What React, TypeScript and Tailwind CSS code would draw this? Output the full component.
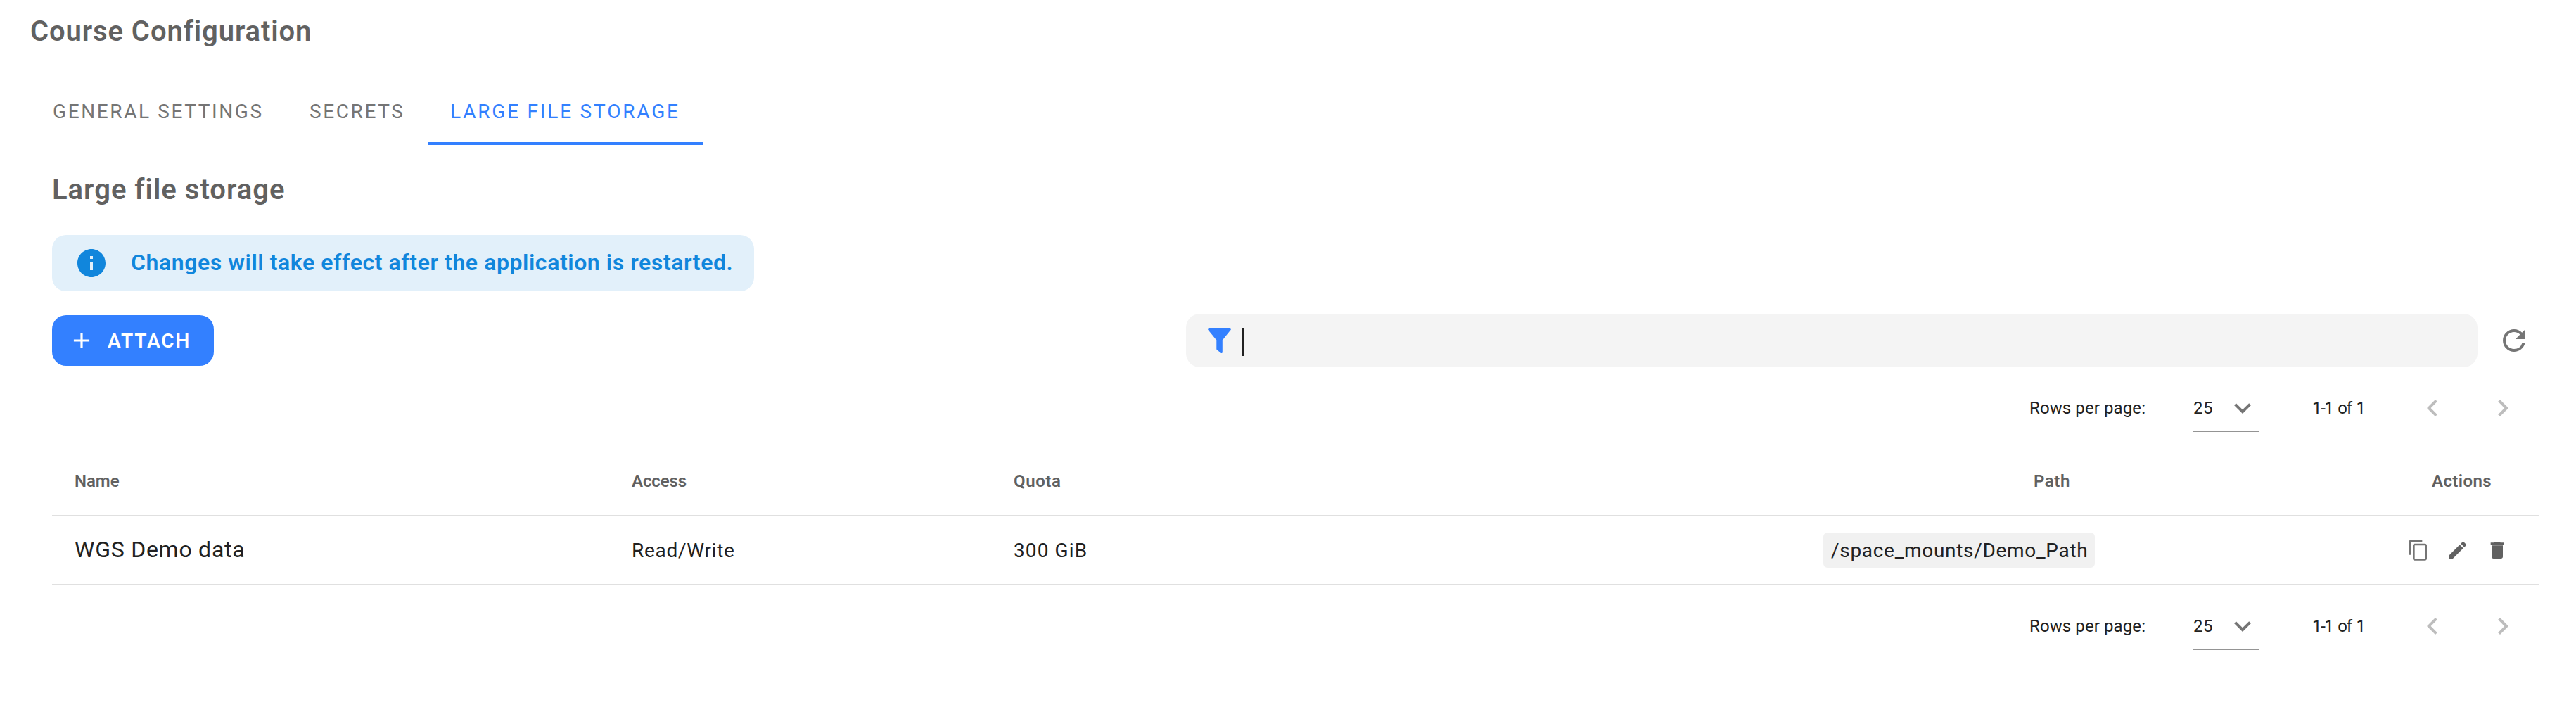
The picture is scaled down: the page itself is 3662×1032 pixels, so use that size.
import {
  MdAdd,
  MdChevronLeft,
  MdChevronRight,
  MdContentCopy,
  MdDelete,
  MdEdit,
  MdExpandMore,
  MdInfo,
  MdRefresh,
} from "react-icons/md";

function FilterIcon() {
  return (
    <svg viewBox="0 0 33 36" className="h-9 w-[33px] shrink-0 fill-[#3380ff]">
      <path d="M1.8 0H31.2C32.8 0 33.5 1.7 32.5 2.9L20.8 17.6V34.4C20.8 35.8 19.3 36.5 18.2 35.6L13 31.3C12.5 30.9 12.3 30.5 12.3 29.9V17.6L.5 2.9C-.5 1.7 .2 0 1.8 0Z" />
    </svg>
  );
}

function Pagination() {
  return (
    <div className="flex h-[88px] items-center text-[24px] leading-8 text-[#212121]">
      <span className="ml-[2811px] w-[233px] whitespace-nowrap tracking-[0.1px]">Rows per page:</span>
      <button className="flex h-[68px] w-[94px] items-center justify-between border-b-2 border-[#949494] pt-0.5">
        <span className="tracking-[0.6px]">25</span>
        <MdExpandMore className="size-12 text-[#757575]" />
      </button>
      <span className="ml-[75px] w-[147px] whitespace-nowrap tracking-[-1.3px] [word-spacing:2px]">1-1 of 1</span>
      <MdChevronLeft className="size-12 text-[#bdbdbd]" />
      <MdChevronRight className="ml-[52px] size-12 text-[#bdbdbd]" />
    </div>
  );
}

export default function App() {
  return (
    <main className="h-[1032px] w-[3662px] overflow-hidden bg-white font-['Roboto',sans-serif] text-[#212121]">
      <h1 className="flex h-22 items-center pt-0.5 pl-[43px] text-[40px] font-semibold tracking-[0.9px] text-[#616161]">
        Course Configuration
      </h1>

      <nav className="mt-[22px] flex h-24 pl-[42px] text-[28px] text-[#757575]">
        <button className="flex w-[364px] items-center pt-0.5 pl-[33px] tracking-[2.6px]">GENERAL SETTINGS</button>
        <button className="flex w-[202px] items-center pt-0.5 pl-[34px] tracking-[2.6px]">SECRETS</button>
        <button className="flex w-[392px] items-center border-b-4 border-[#3380ff] pt-1.5 pl-8 tracking-[2.8px] text-[#3380ff]">
          LARGE FILE STORAGE
        </button>
      </nav>

      <section className="mr-[52px] ml-[74px]">
        <h2 className="flex h-[128px] items-center text-[40px] font-semibold tracking-[1px] text-[#616161]">
          Large file storage
        </h2>

        <div className="flex h-20 w-[998px] items-center rounded-[20px] bg-[#e2f0fa] pl-8 text-[32px] font-semibold tracking-[0.58px] text-[#1186dc]">
          <MdInfo className="mr-8 size-12" />
          <span className="pb-0.5 whitespace-nowrap">Changes will take effect after the application is restarted.</span>
        </div>

        <div className="mt-8 flex h-[76px] items-center">
          <button className="flex h-[72px] w-[230px] items-center rounded-[20px] bg-[#3380ff] pl-[23px] text-[28px] font-semibold tracking-[1.9px] text-white">
            <MdAdd className="mr-[18px] size-[38px]" />
            <span className="pt-0.5">ATTACH</span>
          </button>
          <div className="ml-auto flex h-full w-[1836px] items-center rounded-[20px] bg-[#f4f4f4] pl-[31px]">
            <FilterIcon />
            <span className="mt-1 ml-4 h-10 w-0.5 bg-[#212121]" />
          </div>
          <MdRefresh className="mr-3 ml-7 size-12 text-[#757575]" />
        </div>

        <div className="mt-[14px]">
          <Pagination />
        </div>

        <div className="mt-[10px] grid h-[100px] grid-cols-[793px_542px_1151px_822px_228px] items-center border-b-2 border-[#e0e0e0] pt-0.5 text-[24px] font-semibold text-[#616161]">
          <span className="pl-8">Name</span>
          <span className="pl-[31px] tracking-[-0.1px]">Access</span>
          <span className="pl-8 tracking-[0.6px]">Quota</span>
          <span className="pl-[331px] tracking-[0.6px]">Path</span>
          <span className="pl-[75px] tracking-[0.4px]">Actions</span>
        </div>

        <div className="grid h-[98px] grid-cols-[793px_542px_1151px_822px_228px] items-center border-b-2 border-[#e0e0e0] text-[28px]">
          <span className="pb-[3px] pl-8 text-[32px] tracking-[0.75px]">WGS Demo data</span>
          <span className="pt-0.5 pl-[31px] tracking-[0.7px]">Read/Write</span>
          <span className="pt-0.5 pl-8 tracking-[1.1px]">300 GiB</span>
          <div className="pl-8">
            <span className="flex h-[50px] w-[386px] items-center rounded-md bg-[#f1f1f1] pt-0.5 pl-[11px] tracking-[0.7px]">
              /space_mounts/Demo_Path
            </span>
          </div>
          <div className="flex gap-6 pl-10 text-[#616161]">
            <MdContentCopy className="size-8 text-[#757575]" />
            <MdEdit className="size-8" />
            <MdDelete className="size-8" />
          </div>
        </div>

        <div className="mt-[14px]">
          <Pagination />
        </div>
      </section>
    </main>
  );
}
